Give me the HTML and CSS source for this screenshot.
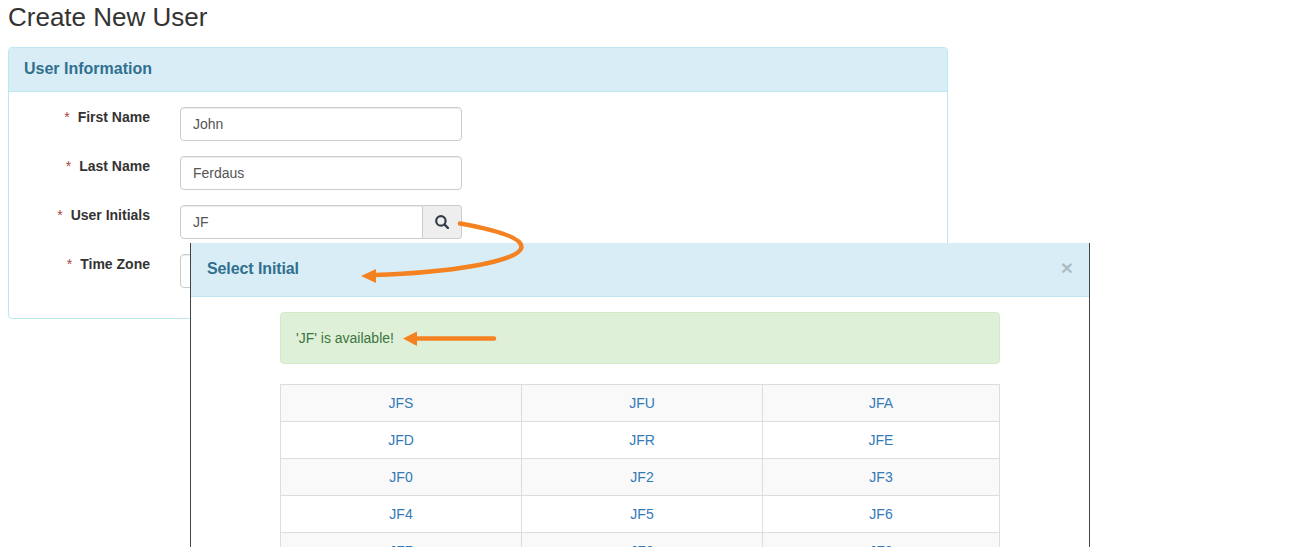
FILE: index.html
```html
<!DOCTYPE html>
<html lang="en">
<head>
<meta charset="utf-8">
<title>Create New User</title>
<link rel="stylesheet" href="styles.css">
</head>
<body>
<h1 class="title">Create New User</h1>
<section class="panel">
  <header class="panel-head">User Information</header>
  <form class="panel-body">
    <div class="row"><label class="label"><span class="req">*</span>First Name</label><div class="control"><input class="input" value="John"></div></div>
    <div class="row"><label class="label"><span class="req">*</span>Last Name</label><div class="control"><input class="input" value="Ferdaus"></div></div>
    <div class="row"><label class="label"><span class="req">*</span>User Initials</label><div class="control"><input class="input input-grouped" value="JF"><button type="button" class="addon"><svg class="search" viewBox="0 0 14 14" width="14" height="14"><circle cx="5.900" cy="5.900" r="4.700" fill="none" stroke="#333d4a" stroke-width="2.200"/><path d="M9.500 9.500l3.400 3.400" fill="none" stroke="#333d4a" stroke-width="2.400" stroke-linecap="round"/></svg></button></div></div>
    <div class="row"><label class="label"><span class="req">*</span>Time Zone</label><div class="control"><input class="input"></div></div>
  </form>
</section>

<div class="modal">
  <header class="modal-head"><span class="modal-title">Select Initial</span><span class="close">×</span></header>
  <div class="modal-body">
    <div class="alert">'JF' is available!</div>
    <table class="grid">
      <colgroup><col class="col-wide"><col class="col-wide"><col></colgroup>
      <tr><td><a>JFS</a></td><td><a>JFU</a></td><td><a>JFA</a></td></tr>
      <tr><td><a>JFD</a></td><td><a>JFR</a></td><td><a>JFE</a></td></tr>
      <tr><td><a>JF0</a></td><td><a>JF2</a></td><td><a>JF3</a></td></tr>
      <tr><td><a>JF4</a></td><td><a>JF5</a></td><td><a>JF6</a></td></tr>
      <tr><td><a>JF7</a></td><td><a>JF8</a></td><td><a>JF9</a></td></tr>
    </table>
  </div>
</div>

<svg class="arrows" width="1297" height="547" viewBox="0 0 1297 547">
  <path d="M460 223.500C485 228 521 236 521.500 246.500C522 262 445 273 374 275" fill="none" stroke="#f58220" stroke-width="4.500" stroke-linecap="round"/>
  <path d="M361 276L376 269V283Z" fill="#f58220"/>
  <path d="M415 338.500H494" fill="none" stroke="#f58220" stroke-width="4.500" stroke-linecap="round"/>
  <path d="M403 338.500L417 331.500V346Z" fill="#f58220"/>
</svg>
</body>
</html>
```
FILE: styles.css
```css
* { box-sizing: border-box; }
html, body { height: 547px; overflow: hidden; }
body {
  margin: 0;
  padding: 0 8px;
  position: relative;
  background: #fff;
  color: #333;
  font-family: "Liberation Sans", Arial, sans-serif;
  font-size: 14px;
  line-height: 20px;
}
.title {
  margin: 0 0 18px;
  height: 29px;
  font-size: 26px;
  line-height: 35px;
  font-weight: 400;
  color: #333;
}
.panel {
  width: 940px;
  height: 272px;
  border: 1px solid #bce8f1;
  border-radius: 4px;
  overflow: hidden;
}
.panel-head {
  height: 44px;
  padding: 10px 15px;
  background: #d9edf7;
  border-bottom: 1px solid #bce8f1;
  color: #31708f;
  font-size: 16px;
  font-weight: 700;
  line-height: 22px;
}
.panel-body { padding: 15px 0 0; display: flex; flex-direction: column; gap: 15px; }
.row { display: flex; height: 34px; }
.label {
  width: 141px;
  padding-top: 0;
  text-align: right;
  font-weight: 700;
  line-height: 20px;
}
.req { color: #a94442; font-weight: 400; margin-right: 8px; }
.control { display: flex; width: 282px; margin-left: 30px; }
.input {
  flex: 1;
  min-width: 0;
  height: 34px;
  padding: 6px 12px;
  border: 1px solid #ccc;
  border-radius: 4px;
  color: #555;
  background: #fff;
  font: 14px/20px "Liberation Sans", Arial, sans-serif;
  box-shadow: inset 0 1px 1px rgba(0,0,0,.075);
}
.input-grouped { border-radius: 4px 0 0 4px; }
.addon {
  display: flex;
  align-items: center;
  justify-content: center;
  width: 39px;
  height: 34px;
  padding: 0;
  border: 1px solid #ccc;
  border-left: 0;
  border-radius: 0 4px 4px 0;
  background: #eee;
}
.search { display: block; }
.modal {
  position: absolute;
  left: 190px;
  top: 243px;
  width: 900px;
  height: 320px;
  background: #fff;
  border-left: 1px solid #444;
  border-right: 1px solid #444;
}
.modal-head {
  display: flex;
  align-items: center;
  justify-content: space-between;
  height: 54px;
  padding: 0 16px 1px;
  background: #d9edf7;
  border-bottom: 1px solid #bce8f1;
}
.modal-title { color: #31708f; font-size: 16px; font-weight: 700; letter-spacing: -.1px; }
.close { color: #000; opacity: .2; font-size: 21px; font-weight: 700; line-height: 1; margin-top: -4px; }
.modal-body { padding: 15px 89px 0; }
.alert {
  height: 52px;
  margin-bottom: 20px;
  padding: 15px;
  background: #dff0d8;
  border: 1px solid #d6e9c6;
  border-radius: 4px;
  color: #3c763d;
}
.grid { width: 720px; border-collapse: collapse; table-layout: fixed; }
.col-wide { width: 241px; }
.grid td {
  height: 37px;
  padding: 8px;
  border: 1px solid #ddd;
  text-align: center;
  line-height: 20px;
}
.grid tr:nth-child(odd) td { background: #f9f9f9; }
.grid a { color: #337ab7; }
.arrows { position: absolute; left: 0; top: 0; pointer-events: none; }
```
